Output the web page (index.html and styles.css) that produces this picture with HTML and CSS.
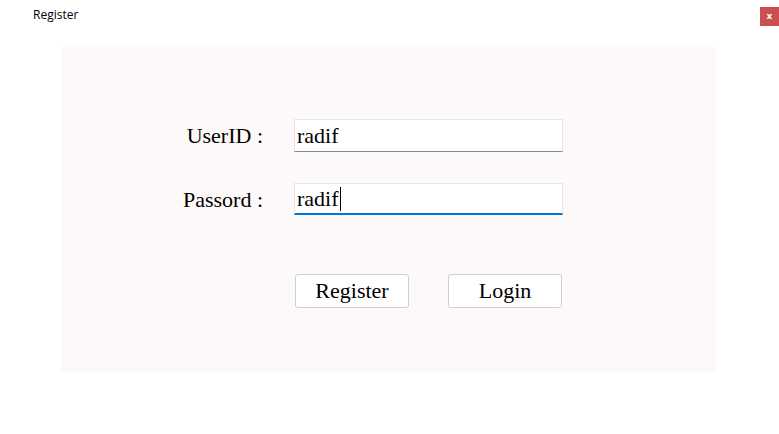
FILE: index.html
```html
<!DOCTYPE html>
<html>
<head>
<meta charset="utf-8">
<link rel="stylesheet" href="styles.css">
</head>
<body>
<div class="window">
  <div class="titlebar">
    <span class="title">Register</span>
    <span class="close">x</span>
  </div>
  <div class="panel">
    <div class="form">
      <div class="label">UserID :</div>
      <div class="field">radif</div>
      <div class="label">Passord :</div>
      <div class="field focused">radif<span class="caret"></span></div>
    </div>
    <div class="buttons">
      <div class="btn">Register</div>
      <div class="btn">Login</div>
    </div>
  </div>
</div>
</body>
</html>
```
FILE: styles.css
```css
html, body {
  margin: 0;
  padding: 0;
  background: #ffffff;
}
.window {
  width: 779px;
  height: 434px;
  display: flex;
  flex-direction: column;
}
.titlebar {
  height: 30px;
  display: flex;
  align-items: flex-start;
  justify-content: space-between;
}
.title {
  font-family: "Open Sans", "Noto Sans", sans-serif;
  font-size: 12px;
  color: #000;
  margin-left: 33px;
  margin-top: 6px;
}
.close {
  width: 19px;
  height: 19px;
  margin-top: 7px;
  background: #c9504f;
  color: #fff;
  font-family: "DejaVu Sans", sans-serif;
  font-weight: bold;
  font-size: 9px;
  display: flex;
  align-items: center;
  justify-content: center;
  line-height: 1;
}
.panel {
  margin-left: 61px;
  margin-top: 17px;
  width: 655px;
  height: 325px;
  background: #fdf9f8;
  box-sizing: border-box;
  padding-top: 72px;
  font-family: "Liberation Serif", "Times New Roman", serif;
  font-size: 22px;
  color: #000;
}
.form {
  display: grid;
  grid-template-columns: 202px 269px;
  column-gap: 31px;
  row-gap: 31px;
  align-items: center;
}
.label {
  text-align: right;
  padding-top: 1px;
}
.field {
  height: 33px;
  box-sizing: border-box;
  background: #fff;
  border: 1px solid #e6e6e6;
  border-bottom: 1px solid #888888;
  padding-left: 2px;
  line-height: 30px;
  display: flex;
  align-items: center;
}
.field.focused {
  height: 32px;
  border-bottom: 2px solid #0078d7;
}
.caret {
  display: inline-block;
  width: 1px;
  height: 24px;
  background: #000;
  margin-left: 1px;
}
.buttons {
  display: flex;
  margin-top: 59px;
  margin-left: 234px;
  gap: 39px;
}
.btn {
  width: 114px;
  height: 34px;
  box-sizing: border-box;
  background: #fff;
  border: 1px solid #cfcfcf;
  border-radius: 3px;
  display: flex;
  align-items: center;
  justify-content: center;
}
```
